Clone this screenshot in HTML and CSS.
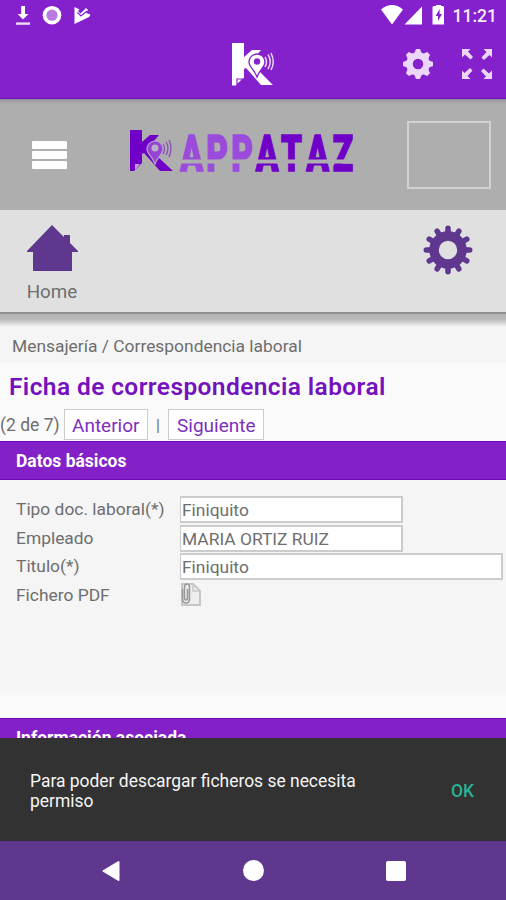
FILE: index.html
```html
<!DOCTYPE html>
<html lang="es">
<head>
    <meta charset="UTF-8">
    <meta name="viewport" content="width=device-width, initial-scale=1.0">
    <title>Kappataz</title>
    <link rel="stylesheet" href="styles.css">
</head>
<body>
    <div class="screen">
        <header class="app-bar">
            <div class="status-bar">
                <svg class="status-icons" width="100" height="32" viewBox="0 0 100 32" fill="#fff">
                    <path d="M21.200 6h3.800v8h3.500L23 19.500 17.600 14h3.600z"/>
                    <path d="M16 22.400h14v2.400H16z" opacity=".85"/>
                    <circle cx="52" cy="15.200" r="9.300"/>
                    <circle cx="52" cy="15.200" r="5.600" fill="#b87be2"/>
                    <path d="M74.500 7l5 2.500L78 11l2.500 2.500L86 8l2 2-2 3 4.500 1.500-1.500 2.500L74.500 24z"/>
                    <path d="M77.500 12.500l3.500 3.500 6-5" fill="none" stroke="#8420cc" stroke-width="1.200"/>
                </svg>
                <div class="status-right">
                    <svg width="66" height="24" viewBox="0 0 66 24" fill="#fff">
                        <path d="M1 5.500Q12 -3.300 23 5.500L12 20.500z"/>
                        <path d="M42 2.500v18H24.500z"/>
                        <path d="M54.500 2h1.500V1h5v1h1.500q1.500 0 1.500 1.200v17.300H52.500V3.200q0-1.200 2-1.200z"/>
                        <path d="M59.600 5l-4 7h2.400v5l4-7h-2.400z" fill="#8420cc"/>
                    </svg>
                    <span class="clock">11:21</span>
                </div>
            </div>
            <div class="tool-bar">
                <svg class="bar-logo" width="44" height="46" viewBox="0 0 44 46">
                    <path d="M1 1h12v14L21 8h9L20 20l10 11 12 12H30L15 26l-2 1v9L5 43.500H1z" fill="#fff"/>
                    <path d="M6 43v-6h6z" fill="#fff" stroke="#8420cc" stroke-width="1.200"/>
                    <path d="M26 35c-3-8-8-10-8-15a8 8 0 0 1 16 0c0 5-5 7-8 15z" fill="#fff" stroke="#8420cc" stroke-width="1.300"/>
                    <circle cx="26" cy="19.500" r="3.200" fill="#8420cc"/>
                    <path d="M34 15q3 5 0 10M37 12.500q4.500 7 0 14.500M40 11q4.500 9 0 17" fill="none" stroke="#e8d2f6" stroke-width="1.500"/>
                </svg>
                <div class="bar-actions">
                    <svg width="32" height="32" viewBox="-16 -16 32 32" fill="#ecd6fa">
                        <circle r="8.500" fill="none" stroke="#ecd6fa" stroke-width="6.500"/>
                        <path id="cog" d="M-3.800-10.500L-2-15h4l1.800 4.500zM-3.800 10.500L-2 15h4l1.800-4.500zM-10.500-3.800L-15-2v4l4.500 1.800zM10.500-3.800L15-2v4l-4.500 1.800z"/>
                        <use href="#cog" transform="rotate(45)"/>
                    </svg>
                    <svg width="32" height="32" viewBox="0 0 32 32" fill="#ecd6fa">
                        <path id="arrow" d="M1 1h8.500L7 3.500l5 5.500-2.500 2.500L4 6.500 1 9.500z"/>
                        <use href="#arrow" transform="rotate(90 16 16)"/>
                        <use href="#arrow" transform="rotate(180 16 16)"/>
                        <use href="#arrow" transform="rotate(270 16 16)"/>
                    </svg>
                </div>
            </div>
        </header>

        <div class="brand-bar">
            <div class="hamburger"><i></i><i></i><i></i></div>
            <svg class="brand" width="230" height="46" viewBox="0 0 230 46">
                <path d="M2 1h12v12L22 6h9L21 18l10 11 14 13H32L16 24l-2 1v9L6 42H2z" fill="#7000c8"/>
                <path d="M7 41v-6h5z" fill="#c89be6"/>
                <path d="M27 35c-3-8-8-10-8-15a8 8 0 0 1 16 0c0 5-5 7-8 15z" fill="#9545d3" stroke="#b9a3c9" stroke-width="1.200"/>
                <circle cx="27" cy="19" r="3.500" fill="#bcaec5"/>
                <path d="M35 15q3 5 0 10M38 13q4 6 0 13M41 11q4 8 0 17" fill="none" stroke="#8b4fb8" stroke-width="1.300"/>
                <g class="wordmark" transform="translate(0 42) scale(.68 1)">
                    <text class="light" x="77 115 152">APP</text>
                    <text x="188 225 262 301">ATAZ</text>
                </g>
                <path d="M50 30.500h178v4H50z" fill="#aeaeae"/>
            </svg>
            <div class="photo-box"></div>
        </div>

        <nav class="home-bar">
            <a class="home-link">
                <svg width="52" height="46" viewBox="0 0 52 46" fill="#5f378e">
                    <path d="M26 0l12 12v-2h6v8l8 8v1h-6v19H7V27H1v-1z"/>
                </svg>
                <span>Home</span>
            </a>
            <svg class="gear" width="50" height="50" viewBox="-25 -25 50 50">
                <circle r="14" fill="none" stroke="#5f378e" stroke-width="9.500"/>
                <g stroke="#5f378e" stroke-width="5.500" stroke-linecap="round">
                    <path id="teeth" d="M-21.700 0h4M17.700 0h4M0-21.700v4M0 17.700v4"/>
                    <use href="#teeth" transform="rotate(30)"/>
                    <use href="#teeth" transform="rotate(60)"/>
                </g>
            </svg>
        </nav>

        <main class="content">
            <div class="breadcrumb">Mensajería / Correspondencia laboral</div>
            <h1>Ficha de correspondencia laboral</h1>
            <div class="pager">
                <span class="count">(2 de 7)</span>
                <a class="page-button prev">Anterior</a>
                <span class="divider">|</span>
                <a class="page-button next">Siguiente</a>
            </div>
            <h2>Datos básicos</h2>
            <div class="form">
                <label>Tipo doc. laboral(*)</label><div class="field">Finiquito</div>
                <label>Empleado</label><div class="field">MARIA ORTIZ RUIZ</div>
                <label>Titulo(*)</label><div class="field wide">Finiquito</div>
                <label>Fichero PDF</label>
                <svg class="file" width="24" height="26" viewBox="0 0 24 26" fill="none">
                    <path d="M3 2h11l7 7v14H3z" fill="#eee" stroke="#c6c6c6" stroke-width="2"/>
                    <path d="M14 2v7h7" stroke="#c6c6c6" stroke-width="1.500"/>
                    <path d="M3.500 7v10q0 4 3.500 4t3.500-4V5q0-3-2.500-3T5.500 5v11q0 2 1.500 2t1.500-2V7" stroke="#999" stroke-width="1.600"/>
                </svg>
            </div>
            <h2>Información asociada</h2>
        </main>

        <div class="snackbar">
            <p>Para poder descargar ficheros se necesita permiso</p>
            <span class="ok">OK</span>
        </div>

        <footer class="nav-bar">
            <svg width="20" height="22" viewBox="0 0 20 22"><path d="M2.500 11L17.500 2v18z" fill="#fff" stroke="#fff" stroke-width="2" stroke-linejoin="round"/></svg>
            <i class="nav-home"></i>
            <i class="nav-recent"></i>
        </footer>
    </div>
</body>
</html>
```
FILE: styles.css
```css
* {
    box-sizing: border-box;
}
body {
    margin: 0;
    font-family: Roboto, sans-serif;
    color: #6e6e6e;
}
.screen {
    display: flex;
    flex-direction: column;
    width: 506px;
    height: 900px;
    overflow: hidden;
    background: #fafafa;
}
.app-bar {
    flex: none;
    height: 99px;
    background: #8420cc;
    border-bottom: 1px solid #6d0db4;
}
.status-bar {
    display: flex;
    justify-content: space-between;
    height: 32px;
}
.status-right {
    display: flex;
    padding: 4px 9px 0 0;
}
.clock {
    margin-left: 7px;
    font-size: 17.500px;
    font-weight: 500;
    line-height: 24px;
    color: #f8edff;
}
.tool-bar {
    display: grid;
    grid-template-columns: 1fr 44px 1fr;
    padding: 10px 13px 0 13px;
}
.bar-logo {
    grid-column: 2;
}
.bar-actions {
    display: flex;
    justify-content: flex-end;
    gap: 27px;
    padding-top: 6px;
}
.brand-bar {
    flex: none;
    display: flex;
    height: 111px;
    background: linear-gradient(#97919b, #aeaeae 5px);
}
.hamburger {
    display: flex;
    flex-direction: column;
    gap: 2px;
    width: 35px;
    margin: 42px 0 0 32px;
}
.hamburger i {
    height: 8px;
    border-radius: 1px;
    background: #fff;
}
.brand {
    margin: 30px 0 0 61px;
}
.wordmark {
    font-size: 49px;
    font-weight: 900;
    fill: #7000c8;
    stroke: #7000c8;
    stroke-width: 1.500px;
}
.wordmark .light {
    fill: #9b4bdc;
    stroke: #9b4bdc;
}
.photo-box {
    width: 84px;
    height: 68px;
    margin: 22px 0 0 49px;
    border: 2px solid #d0d2d1;
}
.home-bar {
    flex: none;
    display: flex;
    justify-content: space-between;
    height: 104px;
    padding: 15px 33px 0 26px;
    background: #e0e0e0;
    border-bottom: 2px solid #8f8f8f;
}
.home-link {
    display: flex;
    flex-direction: column;
    align-items: center;
}
.home-link span {
    margin-top: 10px;
    font-size: 18.800px;
    line-height: 22px;
}
.content {
    flex: 1;
    min-height: 0;
    overflow: hidden;
    background: linear-gradient(#b5b5b5, #b8b8b8 5px, #f5f5f5 13px);
}
.breadcrumb {
    height: 49px;
    padding: 21px 0 0 12px;
    font-size: 17.400px;
    line-height: 22px;
}
h1 {
    margin: 0;
    height: 46px;
    padding: 9px 0 0 9px;
    font-size: 24.500px;
    font-weight: 600;
    letter-spacing: .4px;
    line-height: 29px;
    color: #7412bd;
    background: #fafafa;
}
.pager {
    display: flex;
    height: 32px;
    font-size: 19px;
    line-height: 33px;
    background: #fafafa;
}
.page-button {
    height: 31px;
    padding-left: 7px;
    line-height: 31px;
    color: #7d2fc0;
    background: #fff;
    border: 1px solid #ccc;
}
.count {
    width: 64px;
    font-size: 17.500px;
}
.prev {
    width: 84px;
}
.divider {
    width: 20px;
    font-size: 16px;
    text-align: center;
}
.next {
    width: 96px;
    padding-left: 8px;
}
h2 {
    margin: 0;
    height: 39px;
    padding-left: 16px;
    font-size: 17.500px;
    font-weight: 700;
    line-height: 38px;
    color: #fff;
    background: #8420c8;
    border: solid #7007b7;
    border-width: 1px 0;
}
.form {
    display: grid;
    grid-template-columns: 164px 1fr;
    grid-auto-rows: 28.500px;
    align-content: start;
    height: 238px;
    padding: 16px 3px 0 16px;
    font-size: 17.400px;
    line-height: 26px;
    background: linear-gradient(#f5f5f5 210px, #fafafa 218px);
}
.field {
    width: 223px;
    height: 27px;
    padding-left: 1px;
    line-height: 24px;
    background: #fff;
    border: 2px solid #ccc;
    border-left-width: 1px;
}
.field.wide {
    width: 323px;
}
.file {
    margin-left: -1px;
}
.snackbar {
    flex: none;
    display: flex;
    justify-content: space-between;
    align-items: center;
    height: 103px;
    padding: 2px 32px 0 30px;
    font-size: 17.450px;
    line-height: 20px;
    color: #f5f5f5;
    background: #323232;
}
.snackbar p {
    width: 340px;
    margin: 0;
}
.ok {
    font-weight: 500;
    color: #2bb296;
}
.nav-bar {
    flex: none;
    display: flex;
    justify-content: space-between;
    align-items: center;
    height: 59px;
    padding: 0 100px 0 101px;
    background: #5f378e;
}
.nav-home {
    width: 21px;
    height: 21px;
    border-radius: 50%;
    background: #fff;
}
.nav-recent {
    width: 20px;
    height: 20px;
    border-radius: 2px;
    background: #fff;
}
```
